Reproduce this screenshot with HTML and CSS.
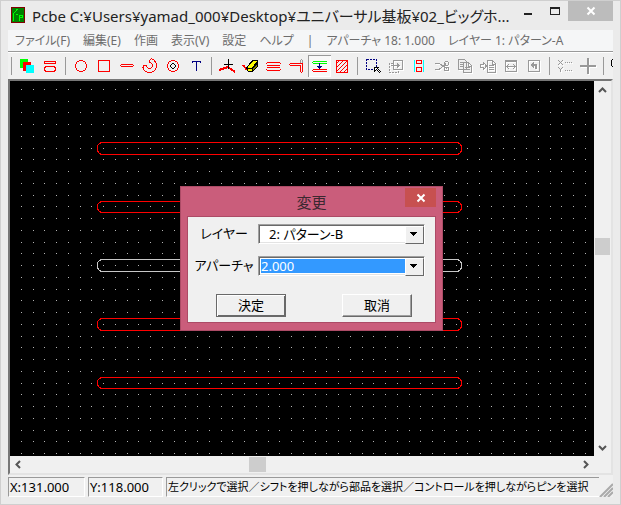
FILE: index.html
```html
<!DOCTYPE html>
<html lang="ja">
<head>
<meta charset="utf-8">
<title>Pcbe</title>
<link rel="stylesheet" href="styles.css">
</head>
<body>
<div class="window">
  <header class="titlebar">
    <svg class="app-icon" viewBox="0 0 14 16" shape-rendering="crispEdges" aria-hidden="true"><path fill="#800000" d="M0 0h14v16H0z"/><path fill="#008000" d="M1 1h12v14H1z"/><path fill="none" stroke="#00ff00" d="M2.500 14V6.500L5.500 3.500M5 2.500h2M4.500 7.500h2M8.500 14V8.500h3v2h-3"/></svg>
    <h1 class="title">Pcbe C:¥Users¥yamad_000¥Desktop¥ユニバーサル基板¥02_ビッグホ...</h1>
    <div class="caption-buttons">
      <button class="cap min" aria-label="最小化"><svg viewBox="0 0 10 10"><path fill="#222" d="M1 5h8v2H1z"/></svg></button>
      <button class="cap max" aria-label="最大化"><svg viewBox="0 0 10 10"><path fill="#222" fill-rule="evenodd" d="M0 1h10v8H0zM1 3v5h8V3z"/></svg></button>
      <button class="cap close" aria-label="閉じる"><svg viewBox="0 0 10 10"><path stroke="#fff" stroke-width="2" d="M1.500 1.500l7 7M8.500 1.500l-7 7"/></svg></button>
    </div>
  </header>
  <nav class="menubar">
    <a href="#">ファイル(F)</a><a href="#">編集(E)</a><a href="#">作画</a><a href="#">表示(V)</a><a href="#">設定</a><a href="#">ヘルプ</a><span class="bar">|</span><a href="#">アパーチャ 18: 1.000</a><a href="#">レイヤー 1: パターン-A</a>
  </nav>
  <div class="toolbar" role="toolbar">
    <i class="sep"></i>
    <button class="tool" aria-label="レイヤー"><svg viewBox="0 0 23 22"><path fill="#0f0" d="M4 4h8v9H4z"/><path fill="red" d="M7 7h8v9H7z"/><path fill="#0ff" d="M10 10h8v8h-8z"/></svg></button>
    <button class="tool" aria-label="アパーチャ"><svg viewBox="0 0 23 22"><g fill="none" stroke="red"><rect x="5.500" y="6.500" width="11" height="2" rx="1"/><rect x="5.500" y="11.500" width="11" height="5" rx="3"/></g></svg></button>
    <i class="sep"></i>
    <button class="tool" aria-label="円"><svg viewBox="0 0 23 22"><circle cx="11" cy="11" r="5.500" fill="none" stroke="red"/></svg></button>
    <button class="tool" aria-label="四角"><svg viewBox="0 0 23 22"><path fill="none" stroke="red" d="M5.500 5.500h11v11h-11z"/></svg></button>
    <button class="tool" aria-label="線"><svg viewBox="0 0 23 22"><path stroke="red" fill="none" d="M5 9.500h12M5 11.500h12M4.500 10v1M17.500 10v1"/></svg></button>
    <button class="tool" aria-label="円弧"><svg viewBox="0 0 23 22"><g fill="none" stroke-linecap="round"><path stroke="red" stroke-width="5" d="M6 12.500C8 17 15 16.500 15.500 11C15.700 8.500 14 6.500 12.500 6"/><path stroke="#f0f0f0" stroke-width="3" d="M6 12.500C8 17 15 16.500 15.500 11C15.700 8.500 14 6.500 12.500 6"/></g></svg></button>
    <button class="tool" aria-label="ドーナツ"><svg viewBox="0 0 23 22"><g fill="none"><circle cx="11" cy="11" r="5.500" stroke="red"/><path stroke="#000" d="M10 8.500h2M10 13.500h2M8.500 10v2M13.500 10v2M9 9.500h1M12 9.500h1M9 12.500h1M12 12.500h1"/></g></svg></button>
    <button class="tool" aria-label="文字"><svg viewBox="0 0 23 22"><path fill="none" stroke="#000080" d="M7 6.500h9M11.500 7v9M7.500 6v2M15.500 6v2"/></svg></button>
    <i class="sep"></i>
    <button class="tool" aria-label="頂点"><svg viewBox="0 0 23 22"><path fill="none" stroke="red" stroke-width="2" d="M3 15l9-3 7 5"/><path stroke="#000" d="M12.500 4v10M8 9.500h9"/></svg></button>
    <button class="tool" aria-label="消しゴム"><svg viewBox="0 0 23 22"><path fill="none" stroke="red" stroke-width="2" d="M4 10l4 5"/><path fill="#000" d="M7 13l6-8h5l1 1v5l-6 6H9z"/><path fill="#ff0" d="M9 12l5-6h4l-5 7H9z"/><path fill="#808000" d="M14 14l4-5v2l-4 5z"/><path fill="#ff0" d="M9 14h4v2H9z"/></svg></button>
    <button class="tool" aria-label="平行線"><svg viewBox="0 0 23 22"><path stroke="red" d="M5 7.500h13M5 10.500h13M5 12.500h13M5 15.500h13M4.500 8v1M18.500 8v1M4.500 14v1M18.500 14v1"/></svg></button>
    <button class="tool" aria-label="延長"><svg viewBox="0 0 23 22"><path stroke="#999" fill="none" d="M15.500 9V5M17.500 9V5M16 4.500h1"/><path fill="none" stroke="red" d="M5 8.500h12.500V17M5 10.500h10.500V17M16 17.500h1M4.500 9v1"/></svg></button>
    <button class="tool pressed" aria-label="間隔"><svg viewBox="0 0 23 22"><path fill="#0f0" d="M5 6h14v1H5zM5 8h14v1H5zM4 7h1v1H4z"/><path fill="red" d="M5 14h14v1H5zM5 16h14v1H5zM4 15h1v1H4z"/><path fill="#000080" d="M11 8h1v3h2v1h-1v1h-1v1h-1v-1h-1v-1H9v-1h2z"/></svg></button>
    <button class="tool" aria-label="塗りつぶし"><svg viewBox="0 0 23 22"><path fill="none" stroke="red" d="M5.500 5.500h11v12h-11zM5 9l4-4M5 13l8-8M5 17l12-12M8 18l9-9M12 18l5-5"/></svg></button>
    <i class="sep"></i>
    <button class="tool" aria-label="選択"><svg viewBox="0 0 23 22"><path fill="none" stroke="#000080" stroke-dasharray="2 1" d="M4.500 4.500h10v10h-10z"/><path fill="#fff" stroke="#000" d="M12.500 12.500h4l-1 1 3 3-1 1-3-3-2 2z"/></svg></button>
    <button class="tool off" aria-label="複写"><svg viewBox="0 0 23 22"><path fill="none" stroke="#999" d="M8.500 5.500h9v9h-9zM6 10.500h9M12.500 8v5M13.500 9v3"/><path fill="none" stroke="#999" stroke-dasharray="2 1" d="M8 8.500H4.500v9h9V15"/></svg></button>
    <button class="tool" aria-label="整列"><svg viewBox="0 0 23 22"><path stroke="#0ff" d="M6.500 5v12M15.500 5v12"/><path fill="none" stroke="red" d="M8.500 5.500h5v3h-5zM8.500 12.500h5v4h-5z"/></svg></button>
    <button class="tool off" aria-label="切り取り"><svg viewBox="0 0 23 22"><path fill="none" stroke="#999" d="M4 8.500h4l5 3 3 2M4 14.500h4l5-4 2-2"/><g fill="none" stroke="#999"><circle cx="15.500" cy="8.500" r="2"/><circle cx="15.500" cy="14" r="2"/></g></svg></button>
    <button class="tool off" aria-label="コピー"><svg viewBox="0 0 23 22"><path fill="#f0f0f0" stroke="#999" d="M4.500 4.500h6l2 2v8h-8zM6 7.500h3M6 9.500h3M6 11.500h3M9.500 7.500h5l3 3v7h-8zM14.500 8v3h3M11 12.500h5M11 14.500h5"/></svg></button>
    <button class="tool off" aria-label="貼り付け"><svg viewBox="0 0 23 22"><path fill="none" stroke="#999" d="M10.500 5.500h5l3 3v9h-8zM15.500 6v3h3M12 10.500h5M12 12.500h5M12 14.500h5M3.500 9.500h3v-2l3 3.500-3 3.500v-2h-3z"/></svg></button>
    <button class="tool off" aria-label="幅"><svg viewBox="0 0 23 22"><path fill="none" stroke="#999" d="M5.500 5.500h11v11h-11zM5 6.500h12M7 11.500h8M9 9l-2 2.500L9 14M13 9l2 2.500L13 14"/></svg></button>
    <button class="tool off" aria-label="元に戻す"><svg viewBox="0 0 23 22"><path fill="none" stroke="#999" d="M5.500 5.500h11v11h-11z"/><path fill="#999" d="M7 10l4-3v2h3v5h-2v-3h-1v2z"/></svg></button>
    <i class="sep"></i>
    <button class="tool off" aria-label="座標"><svg viewBox="0 0 23 22"><path fill="#999" d="M4 5h1v1H4zM8 5h1v1H8zM5 6h1v1H5zM7 6h1v1H7zM6 7h1v1H6zM5 8h1v1H5zM7 8h1v1H7zM4 9h1v1H4zM8 9h1v1H8zM4 12h1v1H4zM8 12h1v1H8zM5 13h1v1H5zM7 13h1v1H7zM6 14h1v3H6z"/><path stroke="#999" stroke-dasharray="1 1" d="M11 7.500h8M11 15.500h8"/></svg></button>
    <button class="tool off" aria-label="原点"><svg viewBox="0 0 23 22"><path fill="#999" d="M3 10h16v2H3zM10 3h2v16h-2z"/></svg></button>
    <i class="sep"></i>
    <button class="tool" aria-label="拡大"><svg viewBox="0 0 23 22"><circle cx="7" cy="8" r="4" fill="none" stroke="#000"/></svg></button>
  </div>
  <main class="workspace">
    <svg class="board" role="img" aria-label="基板">
      <defs><pattern id="grid" width="47" height="47" patternUnits="userSpaceOnUse"><path fill="#b4b4b4" d="M11 8h1v1h-1zM23 8h1v1h-1zM34 8h1v1h-1zM46 8h1v1h-1zM11 20h1v1h-1zM23 20h1v1h-1zM34 20h1v1h-1zM46 20h1v1h-1zM11 31h1v1h-1zM23 31h1v1h-1zM34 31h1v1h-1zM46 31h1v1h-1zM11 43h1v1h-1zM23 43h1v1h-1zM34 43h1v1h-1zM46 43h1v1h-1z"/></pattern></defs>
      <rect width="100%" height="100%" fill="url(#grid)"/>
      <g fill="none" stroke="red">
        <rect x="87.500" y="61.500" width="364" height="12" rx="5"/>
        <rect x="87.500" y="120.500" width="364" height="11" rx="5"/>
        <rect x="87.500" y="178.500" width="364" height="12" rx="5" stroke="#c8c8c8"/>
        <rect x="87.500" y="237.500" width="364" height="12" rx="5"/>
        <rect x="87.500" y="296.500" width="364" height="11" rx="5"/>
      </g>
    </svg>
    <div class="scroll vertical">
      <svg viewBox="0 0 9 9"><path fill="none" stroke="#555" stroke-width="2" d="M1 6l3.500-3.500L8 6"/></svg>
      <i class="thumb"></i>
      <svg viewBox="0 0 9 9"><path fill="none" stroke="#555" stroke-width="2" d="M1 3l3.500 3.500L8 3"/></svg>
    </div>
    <div class="scroll horizontal">
      <svg viewBox="0 0 9 9"><path fill="none" stroke="#555" stroke-width="2" d="M6 1L2.500 4.500 6 8"/></svg>
      <i class="thumb"></i>
      <svg viewBox="0 0 9 9"><path fill="none" stroke="#555" stroke-width="2" d="M3 1l3.500 3.500L3 8"/></svg>
    </div>
  </main>
  <footer class="statusbar">
    <span class="pane x">X:131.000</span>
    <span class="pane y">Y:118.000</span>
    <span class="pane hint">左クリックで選択／シフトを押しながら部品を選択／コントロールを押しながらピンを選択</span>
    <svg class="grip" viewBox="0 0 14 14" aria-hidden="true"><path stroke="#aaa" stroke-width="2" d="M1 14L14 1M5 14l9-9M9 14l5-5"/></svg>
  </footer>
</div>
<form class="dialog" role="dialog" aria-labelledby="dlg-title">
  <header class="dialog-title"><h2 id="dlg-title">変更</h2><button type="button" class="dialog-close" aria-label="閉じる"><svg viewBox="0 0 10 10"><path stroke="#fff" stroke-width="2" d="M1.500 1.500l7 7M8.500 1.500l-7 7"/></svg></button></header>
  <div class="dialog-body">
    <div class="field">
      <label for="layer">レイヤー</label>
      <span class="combo"><select id="layer" class="layer"><option>2: パターン-B</option></select></span>
    </div>
    <div class="field">
      <label for="aperture">アパーチャ</label>
      <span class="combo"><select id="aperture" class="selected"><option>2.000</option></select></span>
    </div>
    <div class="actions"><button type="submit" class="default">決定</button><button type="button">取消</button></div>
  </div>
</form>
</body>
</html>
```
FILE: styles.css
```css
* { box-sizing: border-box; }

body {
  margin: 0;
  position: relative;
  font-family: "Noto Sans", "Noto Sans CJK JP", sans-serif;
  font-size: 13px;
  font-feature-settings: "palt";
  color: #000;
}

button, select { font: inherit; font-feature-settings: inherit; color: inherit; }
button { padding: 0; border: 0; background: none; }
h1, h2 { margin: 0; font-weight: 400; }
svg { display: block; flex: none; }

.window {
  display: flex;
  flex-direction: column;
  height: 100vh;
  padding: 0 7px 7px;
  border: 1px solid #cfcfcf;
  background: #ebebeb;
}

/* Title bar */
.titlebar {
  display: flex;
  align-items: flex-start;
  flex: none;
  height: 29px;
}
.app-icon { width: 14px; height: 16px; margin: 6px 7px 0 3px; }
.title {
  flex: 1;
  min-width: 0;
  padding-top: 2px;
  font-size: 15px;
  line-height: 26px;
  white-space: nowrap;
  color: #222;
}
.caption-buttons { display: flex; flex: none; }
.cap { display: grid; place-items: center; width: 27px; height: 20px; }
.cap svg { width: 10px; height: 10px; }
.cap.close { width: 45px; background: #bcbcbc; }
.cap.min { padding-top: 3px; }

/* Menu */
.menubar {
  display: flex;
  align-items: center;
  gap: 13px;
  flex: none;
  height: 21px;
  padding-left: 7px;
  background: #f5f6f7;
  font-size: 12px;
  line-height: 20px;
  white-space: nowrap;
}
.menubar a, .bar { color: #6d6d6d; text-decoration: none; }

/* Tool bar */
.toolbar {
  display: flex;
  align-items: center;
  flex: none;
  height: 28px;
  border-top: 1px solid #999;
  background: #f0f0f0;
  box-shadow: inset 0 1px #fff;
  overflow: hidden;
}
.tool { flex: none; width: 23px; height: 22px; }
.tool svg { width: 23px; height: 22px; shape-rendering: crispEdges; }
.tool.off svg { filter: drop-shadow(1px 1px 0 #fff); }
.tool.pressed { background: #f8f8f8; box-shadow: inset 1px 1px #999, inset -1px -1px #fff; }
.sep { flex: none; width: 8px; height: 18px; }
.sep::before { content: ""; display: block; width: 1px; height: 18px; margin-left: 3px; background: #999; }

/* Drawing area */
.workspace {
  display: grid;
  grid-template-columns: minmax(0, 1fr) 17px;
  grid-template-rows: minmax(0, 1fr) 17px;
  flex: 1;
  min-height: 0;
  border: 2px solid;
  border-color: #777 #e3e3e3 #e3e3e3 #777;
  background: #f0f0f0;
}
.board { width: 100%; height: 100%; background: #000; shape-rendering: crispEdges; }
.scroll { display: flex; align-items: center; }
.scroll svg { width: 9px; height: 9px; }
.thumb { background: #cdcdcd; }
.vertical { flex-direction: column; padding: 5px 0 4px; }
.vertical .thumb { width: 15px; height: 17px; margin: 143px 0 auto; }
.horizontal { padding: 0 4px; }
.horizontal .thumb { width: 17px; height: 15px; margin: 0 auto 0 226px; }

/* Status bar */
.statusbar {
  display: flex;
  align-items: stretch;
  gap: 3px;
  flex: none;
  height: 22px;
  padding-top: 2px;
  background: #f0f0f0;
}
.pane {
  flex: none;
  padding-left: 1px;
  border: 1px solid;
  border-color: #999 #fff #fff #999;
  line-height: 18px;
  white-space: nowrap;
  overflow: hidden;
}
.x { width: 77px; }
.y { width: 75px; }
.hint { flex: 1; min-width: 0; font-size: 11px; border-right: 0; }
.grip { width: 14px; height: 14px; align-self: flex-end; margin-left: -3px; }

/* Dialog */
.dialog {
  position: absolute;
  left: 180px;
  top: 186px;
  width: 263px;
  padding: 0 6px 7px;
  border: 1px solid #ac4b66;
  background: #ca5d7b;
}
.dialog-title { position: relative; height: 29px; }
.dialog-title h2 { font-size: 15px; line-height: 31px; text-align: center; color: #3c2830; }
.dialog-close {
  position: absolute;
  right: 0;
  top: 1px;
  display: grid;
  place-items: center;
  width: 31px;
  height: 19px;
  background: #c75050;
}
.dialog-close svg { width: 10px; height: 10px; }
.dialog-body {
  display: flex;
  flex-direction: column;
  gap: 12px;
  padding: 7px 10px 5px 6px;
  border: 1px solid #ac4b66;
  background: #f0f0f0;
}
.field { display: flex; align-items: center; height: 20px; }
.field label { flex: none; width: 64px; padding-right: 4px; line-height: 16px; padding-bottom: 2px; text-align: center; white-space: nowrap; }
.combo {
  position: relative;
  display: block;
  flex: 1;
  height: 20px;
  padding: 1px;
  border: 1px solid;
  border-color: #a0a0a0 #fff #fff #a0a0a0;
  background: #fff;
  box-shadow: inset 1px 1px #696969, inset -1px -1px #e3e3e3;
}
.combo select {
  appearance: none;
  display: block;
  width: calc(100% - 16px);
  height: 16px;
  padding: 0 2px;
  border: 0;
  border-radius: 0;
  background: #fff;
  line-height: 16px;
}
.combo .layer { padding-left: 9px; }
.combo .selected { background: #3399ff; color: #fff; border: 1px solid #fff; line-height: 14px; padding: 0; }
.combo::after {
  content: "";
  position: absolute;
  right: 0;
  top: 1px;
  width: 17px;
  height: 16px;
  border: 1px solid;
  border-color: #fff #696969 #696969 #fff;
  background: linear-gradient(#000, #000) 4px 5px / 7px 1px no-repeat,
    linear-gradient(#000, #000) 5px 6px / 5px 1px no-repeat,
    linear-gradient(#000, #000) 6px 7px / 3px 1px no-repeat,
    linear-gradient(#000, #000) 7px 8px / 1px 1px no-repeat, #f0f0f0;
}
.actions { display: flex; justify-content: space-between; padding: 6px 13px 0 22px; }
.actions button {
  width: 70px;
  height: 23px;
  border: 1px solid;
  border-color: #fff #696969 #696969 #fff;
  box-shadow: inset -1px -1px #a0a0a0;
  line-height: 19px;
}
.actions .default { border-color: #696969; box-shadow: inset 1px 1px #fff, inset -1px -1px #696969; }
```
